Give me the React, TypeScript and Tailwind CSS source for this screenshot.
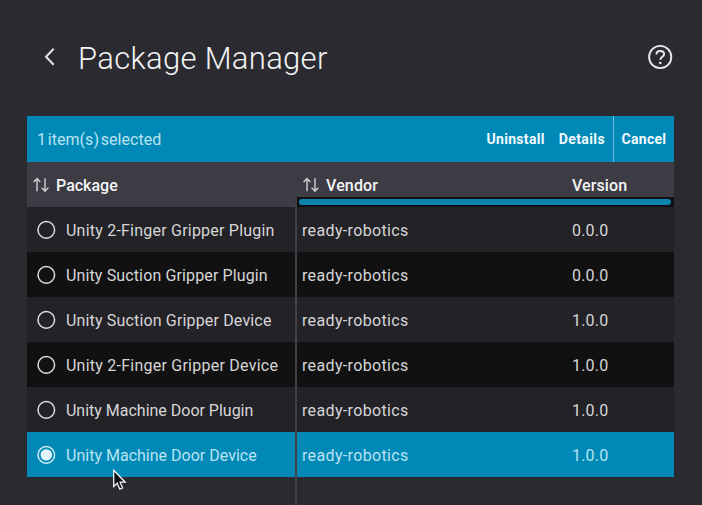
import React from "react";

type Row = { name: string; version: string; tracking: string; selected?: boolean };

const rows: Row[] = [
  { name: "Unity 2-Finger Gripper Plugin", version: "0.0.0", tracking: "tracking-[0.22px]" },
  { name: "Unity Suction Gripper Plugin", version: "0.0.0", tracking: "tracking-[0.13px]" },
  { name: "Unity Suction Gripper Device", version: "1.0.0", tracking: "tracking-[0.16px]" },
  { name: "Unity 2-Finger Gripper Device", version: "1.0.0", tracking: "tracking-[0.24px]" },
  { name: "Unity Machine Door Plugin", version: "1.0.0", tracking: "tracking-[-0.01px]" },
  { name: "Unity Machine Door Device", version: "1.0.0", tracking: "tracking-[0.01px]", selected: true },
];

function SortIcon() {
  return (
    <svg className="block h-4 w-4 shrink-0" viewBox="0 0 16 16" fill="none" stroke="#c9c8ce" strokeWidth="1.5">
      <path d="M4 14.2V1.6M0.6 5L4 1.6L7.4 5M12 1.2V14M8.6 10.7L12 14.1L15.4 10.7" />
    </svg>
  );
}

function Radio({ checked }: { checked?: boolean }) {
  return (
    <svg className="block h-[19px] w-[19px] shrink-0" viewBox="0 0 19 19">
      <circle cx="9.3" cy="9.9" r="8.3" fill="none" stroke={checked ? "#d4edf6" : "#dededf"} strokeWidth="1.5" />
      {checked && <circle cx="9.3" cy="9.9" r="5.7" fill="#e6f5fb" />}
    </svg>
  );
}

export default function App() {
  return (
    <div className="relative h-[505px] w-[702px] overflow-hidden bg-[#2b2a30] font-['Roboto',sans-serif]">
      <header className="flex h-[116px] items-start pl-[43px] pr-[29px]">
        <svg className="mt-[47px] block h-[19px] w-[12px]" viewBox="0 0 12 19" fill="none" stroke="#e4e4e6" strokeWidth="2">
          <path d="M10.7 1.8L3 9.8L10.7 17.8" />
        </svg>
        <h1 className="ml-[23px] mt-[39px] text-[31px] font-light leading-[40px] tracking-[0.32px] text-[#f3f3f4]">
          Package Manager
        </h1>
        <svg className="ml-auto mt-[44px] block h-[26px] w-[26px]" viewBox="0 0 26 26" fill="none" stroke="#e9e9eb" strokeWidth="1.9">
          <circle cx="13.2" cy="13" r="11.1" />
          <path d="M9.4 10.4C9.4 8.2 11 7 13.2 7C15.4 7 17.1 8.2 17.1 10.2C17.1 12.8 13.3 12.6 13.3 15.8" />
          <circle cx="13.3" cy="19" r="1.3" fill="#e9e9eb" stroke="none" />
        </svg>
      </header>

      <main className="ml-[27px] w-[647px]">
        <div className="flex h-[46px] items-center bg-[#0089b7] text-[#f2fafd]">
          <span className="pl-[10px] pt-[2px] text-[16px] tracking-[0.06px] [word-spacing:-2.4px] text-[#b9e3f1]">
            1 item(s) selected
          </span>
          <button className="ml-auto text-[14px] font-bold tracking-[0.3px]">Uninstall</button>
          <button className="ml-[14px] mr-[8px] text-[14px] font-bold tracking-[0.4px]">Details</button>
          <div className="flex h-full w-[61px] items-center border-l border-[#6cc0db] pl-[7.5px]">
            <button className="text-[14px] font-bold tracking-[0.3px]">Cancel</button>
          </div>
        </div>

        <div className="flex h-[45px] bg-[#3d3b43] text-[16px] font-medium text-[#f5f5f6]">
          <div className="flex w-[270px] items-center gap-[7px] pl-[6px]">
            <SortIcon />
            <span className="pt-[2px]">Package</span>
          </div>
          <div className="flex w-[377px] flex-col">
            <div className="flex h-[35px] pl-[6px] pt-[11px] leading-6">
              <div className="flex w-[269px] items-center gap-[7px]">
                <SortIcon />
                <span className="pt-px tracking-[0.15px]">Vendor</span>
              </div>
              <span className="self-center pt-px tracking-[0.1px]">Version</span>
            </div>
            <div className="h-[10px] bg-[#0e1014] pl-[2px] pr-[3px] pt-[2px]">
              <div className="h-[6px] rounded-full bg-[#0c84ae]" />
            </div>
          </div>
        </div>

        {rows.map((row, i) => (
          <div
            key={row.name}
            className={`flex h-[45px] items-center text-[16px] ${
              row.selected ? "bg-[#0089b7] text-[#b9e3f1]" : i % 2 ? "bg-[#111111] text-[#d6d6d7]" : "bg-[#232227] text-[#d6d6d7]"
            }`}
          >
            <div className="flex h-full w-[270px] items-center border-r-2 border-[#424147] pl-[10px]">
              <Radio checked={row.selected} />
              <span className={`ml-[10px] whitespace-nowrap pt-[3px] ${row.tracking}`}>{row.name}</span>
            </div>
            <span className="w-[275px] pl-[5px] pt-[3px] tracking-[0.35px]">ready-robotics</span>
            <span className="pt-[3px] tracking-[0.2px]">{row.version}</span>
          </div>
        ))}
        <div className="h-[28px] w-[270px] border-r-2 border-[#424147]" />
      </main>

      <svg className="absolute left-[112px] top-[469px] h-[22px] w-[15px]" viewBox="0 0 15 22">
        <path
          d="M1.7 1.2V17.4L5.2 14.2L7.8 20.2L10.6 19L8.1 13.2H13.2Z"
          fill="#101114"
          stroke="#f4f4f4"
          strokeWidth="1.3"
        />
      </svg>
    </div>
  );
}
